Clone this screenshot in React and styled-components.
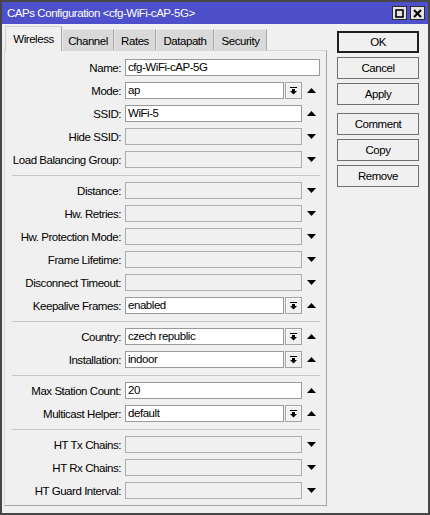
import React from 'react';
import styled, { createGlobalStyle } from 'styled-components';

const FONT = '"Liberation Sans", Arial, sans-serif';

const GlobalStyle = createGlobalStyle`
  html, body {
    margin: 0;
    padding: 0;
    background: #f0f0f0;
  }
  body {
    font-family: ${FONT};
    font-size: 11.5px;
    letter-spacing: -0.45px;
    color: #000;
  }
  * { box-sizing: border-box; }
`;

const TABS = [
  { label: 'Wireless', width: 57, active: true },
  { label: 'Channel', width: 52 },
  { label: 'Rates', width: 42 },
  { label: 'Datapath', width: 58 },
  { label: 'Security', width: 53 },
];

const SECTIONS = [
  [
    { label: 'Name', value: 'cfg-WiFi-cAP-5G', wide: true },
    { label: 'Mode', value: 'ap', select: true, arrow: 'up' },
    { label: 'SSID', value: 'WiFi-5', arrow: 'up' },
    { label: 'Hide SSID', disabled: true, arrow: 'down' },
    { label: 'Load Balancing Group', disabled: true, arrow: 'down' },
  ],
  [
    { label: 'Distance', disabled: true, arrow: 'down' },
    { label: 'Hw. Retries', disabled: true, arrow: 'down' },
    { label: 'Hw. Protection Mode', disabled: true, arrow: 'down' },
    { label: 'Frame Lifetime', disabled: true, arrow: 'down' },
    { label: 'Disconnect Timeout', disabled: true, arrow: 'down' },
    { label: 'Keepalive Frames', value: 'enabled', select: true, arrow: 'up' },
  ],
  [
    { label: 'Country', value: 'czech republic', select: true, arrow: 'up' },
    { label: 'Installation', value: 'indoor', select: true, arrow: 'up' },
  ],
  [
    { label: 'Max Station Count', value: '20', arrow: 'up' },
    { label: 'Multicast Helper', value: 'default', select: true, arrow: 'up' },
  ],
  [
    { label: 'HT Tx Chains', disabled: true, arrow: 'down' },
    { label: 'HT Rx Chains', disabled: true, arrow: 'down' },
    { label: 'HT Guard Interval', disabled: true, arrow: 'down' },
  ],
];

const BUTTONS = [
  { label: 'OK', primary: true },
  { label: 'Cancel' },
  { label: 'Apply' },
  { label: 'Comment', spaced: true },
  { label: 'Copy' },
  { label: 'Remove' },
];

const Window = styled.div`
  width: 430px;
  height: 515px;
  border: 2px solid #464646;
  background: #f0f0f0;
  display: flex;
  flex-direction: column;
`;

const TitleBar = styled.div`
  height: 22px;
  flex: none;
  background: #4e4fca;
  color: #fff;
  display: flex;
  align-items: center;
  padding: 0 3px 0 5px;
`;

const Title = styled.span`
  flex: 1;
  white-space: nowrap;
`;

const TitleButton = styled.span`
  width: 15px;
  height: 14px;
  margin-left: 3px;
  background: #e4e4e4;
  border: 1px solid #2e2e2e;
  display: flex;
  align-items: center;
  justify-content: center;
`;

const Body = styled.div`
  flex: 1;
  display: flex;
  gap: 10px;
  padding: 2px 0 0 2px;
`;

const Main = styled.div`
  width: 323px;
  display: flex;
  flex-direction: column;
`;

const TabStrip = styled.div`
  height: 24px;
  display: flex;
  align-items: flex-end;
  padding-left: 1px;
  position: relative;
  z-index: 1;
`;

const Tab = styled.div`
  width: ${p => p.width}px;
  height: ${p => (p.active ? 25 : 21)}px;
  margin-bottom: ${p => (p.active ? -1 : 0)}px;
  background: ${p => (p.active ? '#f0f0f0' : '#d9d9d9')};
  border: 1px solid ${p => (p.active ? '#d0d0d0' : '#e6e6e6')};
  border-right-color: #a9a9a9;
  border-bottom: none;
  display: flex;
  align-items: center;
  justify-content: center;
  padding-top: ${p => (p.active ? 0 : 1)}px;
  white-space: nowrap;
`;

const Panel = styled.div`
  border: 1px solid #a7a7a7;
  border-top-color: #d6d6d6;
  border-left-color: #d6d6d6;
  padding: 8px 0 6px 0;
  display: flex;
  flex-direction: column;
`;

const Section = styled.div`
  display: flex;
  flex-direction: column;
  gap: 6px;
`;

const Divider = styled.div`
  height: 1px;
  margin: 7px 6px 6px 7px;
  background: #c8c8c8;
`;

const Row = styled.div`
  display: flex;
  align-items: center;
  height: 17px;
  padding-left: 3px;
`;

const Label = styled.label`
  width: 113px;
  margin-right: 4px;
  text-align: right;
  white-space: nowrap;
`;

const Field = styled.div`
  width: ${p => (p.wide ? 195 : 177)}px;
  height: 17px;
  display: flex;
  gap: 1px;
`;

const Input = styled.div`
  flex: 1;
  height: 17px;
  border: 1px solid ${p => (p.disabled ? '#adadad' : '#9a9a9a')};
  background: ${p => (p.disabled ? '#f0f0f0' : '#fff')};
  padding-left: 2px;
  line-height: 15px;
  white-space: nowrap;
  overflow: hidden;
`;

const DropButton = styled.div`
  width: 17px;
  height: 17px;
  border: 1px solid #a3a3a3;
  background: #f0f0f0;
  box-shadow: inset 1px 1px 0 #fff;
  display: flex;
  align-items: center;
  justify-content: center;
`;

const ArrowCell = styled.div`
  width: 18px;
  height: 17px;
  display: flex;
  align-items: center;
  justify-content: center;
`;

const Buttons = styled.div`
  width: 82px;
  margin-top: 5px;
  display: flex;
  flex-direction: column;
  gap: 4px;
`;

const Button = styled.button`
  height: 22px;
  margin-top: ${p => (p.spaced ? 4 : 0)}px;
  font: inherit;
  letter-spacing: inherit;
  color: #000;
  background: #f0f0f0;
  border: ${p => (p.primary ? '2px solid #1e1e1e' : '1px solid #707070')};
  padding: 0;
`;

const Triangle = ({ dir }) => (
  <svg width="9" height="5" viewBox="0 0 9 5">
    {dir === 'up'
      ? <polygon points="4.5,0 9,5 0,5" fill="#000" />
      : <polygon points="0,0 9,0 4.5,5" fill="#000" />}
  </svg>
);

const DropIcon = () => (
  <svg width="7" height="8" viewBox="0 0 7 8">
    <rect x="0" y="0" width="7" height="1" fill="#000" />
    <rect x="2" y="2" width="3" height="2" fill="#000" />
    <polygon points="0,4 7,4 3.5,7.5" fill="#000" />
  </svg>
);

const FormRow = ({ label, value, wide, select, disabled, arrow }) => (
  <Row>
    <Label>{label}:</Label>
    <Field wide={wide}>
      <Input disabled={disabled}>{value}</Input>
      {select && <DropButton><DropIcon /></DropButton>}
    </Field>
    {arrow && <ArrowCell><Triangle dir={arrow} /></ArrowCell>}
  </Row>
);

const App = () => {
  return (
    <>
      <GlobalStyle />
      <Window>
        <TitleBar>
          <Title>CAPs Configuration &lt;cfg-WiFi-cAP-5G&gt;</Title>
          <TitleButton>
            <svg width="9" height="9" viewBox="0 0 9 9">
              <rect x="1" y="1" width="7" height="7" fill="none" stroke="#000" strokeWidth="1.6" />
            </svg>
          </TitleButton>
          <TitleButton>
            <svg width="9" height="9" viewBox="0 0 9 9">
              <path d="M1 1 L8 8 M8 1 L1 8" stroke="#000" strokeWidth="2" />
            </svg>
          </TitleButton>
        </TitleBar>
        <Body>
          <Main>
            <TabStrip>
              {TABS.map(t => (
                <Tab key={t.label} width={t.width} active={t.active}>{t.label}</Tab>
              ))}
            </TabStrip>
            <Panel>
              {SECTIONS.map((rows, i) => (
                <React.Fragment key={i}>
                  {i > 0 && <Divider />}
                  <Section>
                    {rows.map(r => <FormRow key={r.label} {...r} />)}
                  </Section>
                </React.Fragment>
              ))}
            </Panel>
          </Main>
          <Buttons>
            {BUTTONS.map(b => (
              <Button key={b.label} primary={b.primary} spaced={b.spaced}>{b.label}</Button>
            ))}
          </Buttons>
        </Body>
      </Window>
    </>
  );
};

export default App;
